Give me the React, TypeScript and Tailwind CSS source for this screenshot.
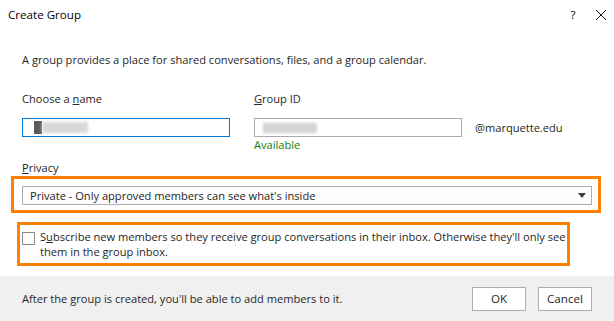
import React from 'react';

export default function App() {
  return (
    <div
      className="w-[614px] h-[321px] bg-white flex flex-col text-[11.1px] text-[#262626] overflow-hidden"
      style={{ fontFamily: '"Segoe UI", "Open Sans", "Noto Sans", sans-serif' }}
    >
      {/* Title bar */}
      <div className="h-[30px] flex items-center pl-[8px] pr-[6px] text-[11.6px]">
        <span className="text-black leading-[16px]">Create Group</span>
        <span className="ml-auto text-black w-[12px] text-center">?</span>
        <span className="ml-[15px] w-[14px] flex items-center justify-center">
          <svg width="12" height="12" viewBox="0 0 12 12" fill="none" stroke="#111" strokeWidth="1">
            <path d="M1 1L11 11M11 1L1 11" />
          </svg>
        </span>
      </div>

      {/* Body */}
      <div className="flex-1 flex flex-col px-[22px]">
        <p className="mt-[22px] leading-[16px]">
          A group provides a place for shared conversations, files, and a group calendar.
        </p>

        <div className="mt-[23px] flex">
          <div className="w-[232px] flex flex-col">
            <label className="leading-[16px]">
              Choose a <span className="underline">n</span>ame
            </label>
            <div className="mt-[11px] w-[208px] h-[19px] border border-[#0078d7] flex items-center pl-[11px]">
              <div className="w-[8px] h-[13px] bg-[#5a5a5a] blur-[0.5px]" />
              <div className="w-[46px] h-[11px] bg-[#d8d8d8] blur-[1.5px]" />
            </div>
          </div>
          <div className="flex flex-col">
            <label className="leading-[16px]">
              <span className="underline">G</span>roup ID
            </label>
            <div className="mt-[11px] flex items-center">
              <div className="w-[208px] h-[19px] border border-[#ababab] flex items-center pl-[8px]">
                <div className="w-[54px] h-[10px] bg-[#d4d4d4] blur-[1.5px]" />
              </div>
              <span className="ml-[13px] leading-[16px]">@marquette.edu</span>
            </div>
            <span className="leading-[16px] text-[#107c10]">Available</span>
          </div>
        </div>

        <label className="mt-[7px] leading-[16px]">
          <span className="underline">P</span>rivacy
        </label>

        <div className="-ml-[11px] w-[590px] border-[3px] border-[#ff8000] pt-[7px] pb-[5px] pl-[8px] pr-[6px]">
          <div className="h-[19px] border border-[#adadad] bg-[#fdfdfd] flex items-center pl-[7px] pr-[5px]">
            <span className="leading-[16px]">Private - Only approved members can see what's inside</span>
            <svg className="ml-auto" width="8" height="5" viewBox="0 0 8 5">
              <path d="M0 0H8L4 5Z" fill="#404040" />
            </svg>
          </div>
        </div>

        <div className="mt-[9px] -ml-[5px] w-[553px] border-[3px] border-[#ff8000] pl-[2px] pt-[4px] pb-[4px] flex items-start">
          <div className="mt-[3px] w-[13px] h-[13px] border border-[#8a8a8a] bg-white shrink-0" />
          <p className="ml-[5px] leading-[15px]">
            <span className="whitespace-nowrap">
              S<span className="underline">u</span>bscribe new members so they receive group conversations in their inbox. Otherwise they'll only see
            </span>
            <br />
            them in the group inbox.
          </p>
        </div>
      </div>

      {/* Footer */}
      <div className="h-[45px] bg-[#f0f0f0] flex items-center pl-[22px] pr-[22px]">
        <span className="leading-[16px]">After the group is created, you'll be able to add members to it.</span>
        <button className="ml-auto w-[54px] h-[24px] border border-[#adadad] bg-white text-[11.6px] text-[#262626]">
          OK
        </button>
        <button className="ml-[12px] w-[54px] h-[24px] border border-[#adadad] bg-white text-[11.6px] text-[#262626]">
          Cancel
        </button>
      </div>
    </div>
  );
}
